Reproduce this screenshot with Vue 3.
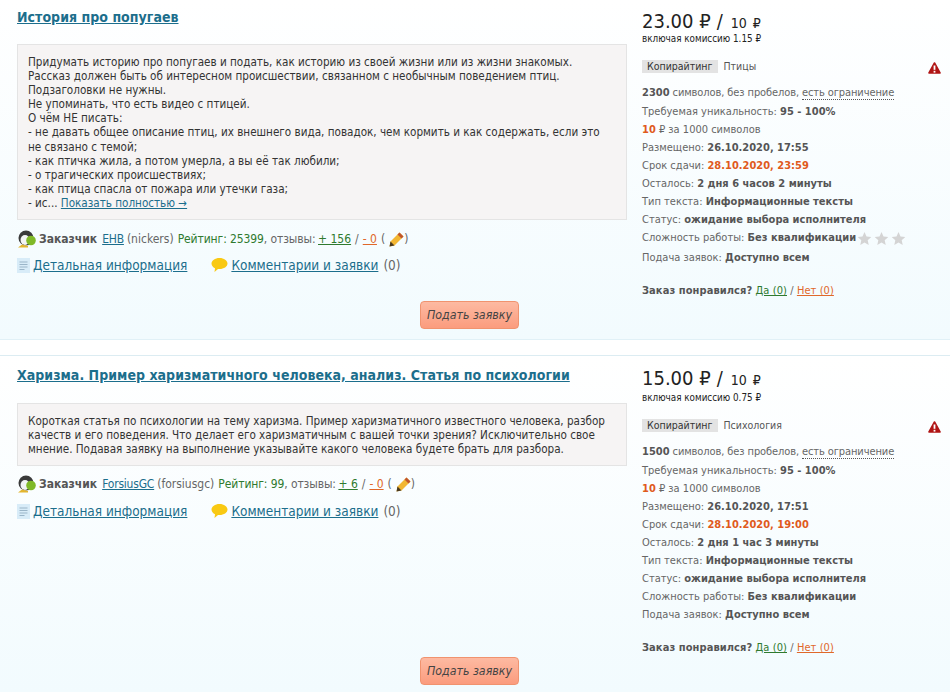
<script setup>
const orders = [
  {
    title: 'История про попугаев', price: '23.00', per: '10', fee: '1.15', cat: 'Птицы',
    lines: ['Придумать историю про попугаев и подать, как историю из своей жизни или из жизни знакомых.','Рассказ должен быть об интересном происшествии, связанном с необычным поведением птиц.','Подзаголовки не нужны.','Не упоминать, что есть видео с птицей.','О чём НЕ писать:','- не давать общее описание птиц, их внешнего вида, повадок, чем кормить и как содержать, если это','не связано с темой;','- как птичка жила, а потом умерла, а вы её так любили;','- о трагических происшествиях;','- как птица спасла от пожара или утечки газа;'],
    more: '- ис... ', user: 'ЕНВ', login: 'nickers', rating: '25399', plus: '156', chars: '2300', posted: '26.10.2020, 17:55', due: '28.10.2020, 23:59', left: '2 дня 6 часов 2 минуты', stars: true
  },
  {
    title: 'Харизма. Пример харизматичного человека, анализ. Статья по психологии', price: '15.00', per: '10', fee: '0.75', cat: 'Психология',
    lines: ['Короткая статья по психологии на тему харизма. Пример харизматичного известного человека, разбор качеств и его поведения. Что делает его харизматичным с вашей точки зрения? Исключительно свое мнение. Подавая заявку на выполнение указывайте какого человека будете брать для разбора.'],
    more: '', user: 'ForsiusGC', login: 'forsiusgc', rating: '99', plus: '6', chars: '1500', posted: '26.10.2020, 17:51', due: '28.10.2020, 19:00', left: '2 дня 1 час 3 минуты', stars: false
  }
]
</script>

<template>
  <div class="page">
    <section v-for="o in orders" :key="o.user" class="order">
      <div class="main">
        <a class="title">{{ o.title }}</a>
        <div class="desc">
          <div v-for="l in o.lines" :key="l">{{ l }}</div>
          <div v-if="o.more">{{ o.more }}<a class="link">Показать полностью →</a></div>
        </div>
        <div class="customer">
          <svg class="ava" width="20" height="18" viewBox="0 0 20 18">
            <circle cx="9" cy="8" r="7.500" fill="#3a3a3a"/>
            <ellipse cx="8" cy="10" rx="4.500" ry="5" fill="#f2f4f4"/>
            <path d="M1 17.500l4-3 6 1.500v1.500z" fill="#e3b52f"/>
            <circle cx="14" cy="10.500" r="4.800" fill="#7fb927"/>
          </svg>
          <b class="cust-label">Заказчик</b>
          <a class="link user">{{ o.user }}</a>
          <span class="grey">({{ o.login }})</span>
          <span class="grey stat"><span class="green">Рейтинг: {{ o.rating }}</span>, отзывы:</span>
          <a class="plus">+ {{ o.plus }}</a>
          <span class="grey">/</span>
          <a class="minus">- 0</a>
          <span class="grey">(</span>
          <svg class="pencil" width="15" height="16" viewBox="0 0 15 16">
            <path d="M10.500 1.500l4 4-9 9-5 1 1-5z" fill="#f2b632"/>
            <path d="M10.500 1.500l4 4-2 2-4-4z" fill="#c0562c"/>
            <path d="M1.500 10.500l4 4-5 1z" fill="#4a3a20"/>
          </svg>
          <span class="grey">)</span>
        </div>
        <div class="actions">
          <span class="action">
            <svg width="13" height="15" viewBox="0 0 13 15">
              <rect width="13" height="15" fill="#d8ecf8"/>
              <path d="M2.500 4h8M2.500 6.500h8M2.500 9h8M2.500 11.500h5" stroke="#9ab5c8" fill="none"/>
            </svg>
            <a class="big-link">Детальная информация</a>
          </span>
          <span class="action">
            <svg width="17" height="16" viewBox="0 0 17 16">
              <path d="M8.500 1C13 1 16.500 3.500 16.500 6.500S13 12 8.500 12H7l-3.500 3 .5-3.700C2 10.300.5 8.500.5 6.500.5 3.500 4 1 8.500 1z" fill="#f9c913"/>
            </svg>
            <a class="big-link">Комментарии и заявки</a>
            <span class="count">(0)</span>
          </span>
        </div>
      </div>

      <aside class="side">
        <div class="price"><span class="sum">{{ o.price }} ₽</span><span class="slash">/</span><span class="sum-per">{{ o.per }} ₽</span></div>
        <div class="fee">включая комиссию {{ o.fee }} ₽</div>
        <div class="cats">
          <span class="tag">Копирайтинг</span>
          <span class="cat">{{ o.cat }}</span>
          <svg class="warn" width="13" height="12" viewBox="0 0 13 12">
            <path d="M6.500 1L12 11H1z" fill="#b01515" stroke="#b01515" stroke-width="1.600" stroke-linejoin="round"/>
            <rect x="5.600" y="3.500" width="1.800" height="4.300" fill="#fff"/>
            <rect x="5.600" y="8.800" width="1.800" height="1.800" fill="#fff"/>
          </svg>
        </div>
        <div class="row tight"><b>{{ o.chars }}</b> символов, без пробелов, <span class="dotted">есть ограничение</span></div>
        <div class="row">Требуемая уникальность: <b>95 - 100%</b></div>
        <div class="row"><b class="orange">10</b> ₽ за 1000 символов</div>
        <div class="row">Размещено: <b>{{ o.posted }}</b></div>
        <div class="row">Срок сдачи: <b class="orange">{{ o.due }}</b></div>
        <div class="row">Осталось: <b>{{ o.left }}</b></div>
        <div class="row">Тип текста: <b>Информационные тексты</b></div>
        <div class="row">Статус: <b>ожидание выбора исполнителя</b></div>
        <div class="row" :class="{ starred: o.stars }">Сложность работы: <b>Без квалификации</b>
          <span v-if="o.stars" class="stars">
            <svg v-for="n in 3" :key="n" width="15" height="15" viewBox="0 0 15 15"><path d="M7.500 1l2 4.500 4.800.5-3.600 3.200 1 4.800-4.200-2.500L3.300 14l1-4.800L.7 6l4.800-.5z" fill="#d4d4d4"/></svg>
          </span>
        </div>
        <div class="row">Подача заявок: <b>Доступно всем</b></div>
        <div class="like"><b>Заказ понравился?</b> <a class="yes">Да (0)</a> / <a class="no">Нет (0)</a></div>
      </aside>

      <div class="foot"><button class="apply">Подать заявку</button></div>
    </section>
  </div>
</template>

<style>
html, body { margin: 0; background: #fff; }
</style>

<style scoped>
.page { width: 950px; height: 692px; overflow: hidden; font-family: "DejaVu Sans", sans-serif; font-stretch: condensed; color: #333; }
.order { display: grid; grid-template-columns: 610px 1fr; column-gap: 15px; padding: 0 0 0 17px; background: linear-gradient(#fff, #f2fbfe); border-bottom: 1px solid #e1f1f7; height: 340px; margin-bottom: 15px; box-sizing: border-box; align-content: start; position: relative; }
.order + .order { height: 337px; margin-bottom: 0; border-bottom: 0; border-top: 1px solid #dcecf2; padding-top: 2px; }
.main { min-width: 0; padding-top: 8px; }
.title { display: block; font-size: 14px; font-weight: 700; line-height: 18px; letter-spacing: .03px; color: #1c6e8c; text-decoration: underline; }
.desc { margin-top: 18px; padding: 10px 7px 9px 10px; background: #f6f4f4; border: 1px solid #e4e4e4; font-size: 11.600px; line-height: 14.100px; color: #333; }
.order + .order .desc { margin-top: 19px; }
.link { color: #1c6e8c; text-decoration: underline; }
.customer { display: flex; align-items: center; gap: 4px; margin-top: 10px; height: 18px; font-size: 12px; color: #666; white-space: nowrap; }
.order + .order .customer { margin-top: 9px; }
.order + .order .actions { margin-top: 8px; }
.ava { margin-right: -2px; }
.user { letter-spacing: -.2px; margin-right: -1px; margin-left: 1px; }
.stat { letter-spacing: -.1px; margin-right: -1.500px; }
.pencil { margin-right: -4px; }
.cust-label { color: #555; }
.grey { color: #666; }
.green { color: #2f7a2f; }
.plus { color: #2f7a2f; text-decoration: underline; }
.minus { color: #e0682a; text-decoration: underline; }
.actions { display: flex; gap: 24px; margin-top: 7px; height: 20px; align-items: center; font-size: 13.500px; }
.action { display: inline-flex; align-items: center; gap: 3px; }
.big-link { color: #1c6e8c; text-decoration: underline; }
.count { color: #666; margin-left: 2px; }
.side { padding-top: 8px; color: #666; font-size: 11px; }
.price { height: 26px; line-height: 26px; color: #222; white-space: nowrap; }
.order + .order .price { margin-top: -1px; height: 28px; }
.sum { font-size: 20px; }
.slash { font-size: 20px; margin-left: 6px; }
.sum-per { font-size: 14px; margin-left: 8px; word-spacing: 2px; }
.fee { font-size: 9.800px; line-height: 12px; color: #222; margin-top: -1px; }
.cats { display: flex; align-items: center; margin-top: 14px; height: 14px; width: 299px; position: relative; font-size: 10.500px; }
.tag { background: #e3e3e3; padding: 0 5px; line-height: 13px; color: #333; }
.cat { margin-left: 6px; color: #555; }
.warn { position: absolute; right: 0; top: 3px; }
.row { height: 18px; line-height: 18px; white-space: nowrap; }
.cats + .row { margin-top: 11px; height: 19px; }
.row.tight { letter-spacing: -.1px; }
.row.starred { height: 20px; }
.row b { color: #555; letter-spacing: 0; }
.row b.orange { color: #e05a1c; }
.stars { display: inline-flex; gap: 2px; vertical-align: -5px; margin-left: 1px; }
.dotted { border-bottom: 1px dotted #555; }
.like { margin-top: 15px; line-height: 18px; white-space: nowrap; letter-spacing: .08px; }
.like b { color: #555; }
.yes { color: #2f7a2f; text-decoration: underline; }
.no { color: #e0682a; text-decoration: underline; }
.foot { position: absolute; left: 420px; top: 301px; }
.apply { width: 99px; height: 28px; padding: 0; border: 1px solid #f0936f; border-radius: 4px; background: linear-gradient(#fdbaa2, #fb9c7e); font: italic 12.300px "DejaVu Sans", sans-serif; font-stretch: condensed; color: #444; }
</style>
